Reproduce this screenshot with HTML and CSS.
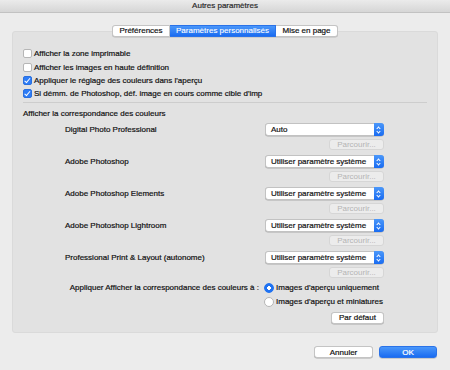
FILE: index.html
```html
<!DOCTYPE html>
<html lang="fr">
<head>
  <meta charset="UTF-8">
  <title>Autres paramètres</title>
  <link rel="stylesheet" href="styles.css">
</head>
<body>
  <div class="window">
    <div class="titlebar">Autres paramètres</div>

    <div class="tabs">
      <span class="tab tab-prefs">Préférences</span>
      <span class="tab tab-custom active">Paramètres personnalisés</span>
      <span class="tab tab-layout">Mise en page</span>
    </div>

    <div class="group">
      <label class="check"><span class="box"></span>Afficher la zone imprimable</label>
      <label class="check"><span class="box"></span>Afficher les images en haute définition</label>
      <label class="check"><span class="box on"></span>Appliquer le réglage des couleurs dans l'aperçu</label>
      <label class="check"><span class="box on"></span>Si démm. de Photoshop, déf. image en cours comme cible d'imp</label>

      <div class="separator"></div>

      <div class="heading">Afficher la correspondance des couleurs</div>

      <div class="apps">
        <div class="app">
          <span class="app-name">Digital Photo Professional</span>
          <span class="select">Auto<span class="arrows"></span></span>
          <span class="btn disabled">Parcourir...</span>
        </div>
        <div class="app">
          <span class="app-name">Adobe Photoshop</span>
          <span class="select">Utiliser paramètre système<span class="arrows"></span></span>
          <span class="btn disabled">Parcourir...</span>
        </div>
        <div class="app">
          <span class="app-name">Adobe Photoshop Elements</span>
          <span class="select">Utiliser paramètre système<span class="arrows"></span></span>
          <span class="btn disabled">Parcourir...</span>
        </div>
        <div class="app">
          <span class="app-name">Adobe Photoshop Lightroom</span>
          <span class="select">Utiliser paramètre système<span class="arrows"></span></span>
          <span class="btn disabled">Parcourir...</span>
        </div>
        <div class="app">
          <span class="app-name">Professional Print &amp; Layout (autonome)</span>
          <span class="select">Utiliser paramètre système<span class="arrows"></span></span>
          <span class="btn disabled">Parcourir...</span>
        </div>
      </div>

      <div class="apply">
        <span class="apply-label">Appliquer Afficher la correspondance des couleurs à :</span>
        <div class="radios">
          <label class="radio"><span class="dot on"></span>Images d'aperçu uniquement</label>
          <label class="radio"><span class="dot"></span>Images d'aperçu et miniatures</label>
          <span class="btn default-btn">Par défaut</span>
        </div>
      </div>
    </div>

    <div class="footer">
      <span class="btn footer-btn">Annuler</span>
      <span class="btn footer-btn primary">OK</span>
    </div>
  </div>
</body>
</html>
```

FILE: styles.css
```css
body {
  margin: 0;
  font-family: "Liberation Sans", Arial, sans-serif;
  font-size: 8px;
  color: #111;
  -webkit-text-stroke: 0.2px;
}
.window {
  width: 450px;
  height: 370px;
  background-color: #ececec;
  overflow: hidden;
}
.titlebar {
  height: 13px;
  line-height: 12px;
  box-sizing: border-box;
  text-align: center;
  background: linear-gradient(#ebebeb, #d6d6d6);
  border-bottom: 1px solid #c2c2c2;
  color: #2a2a2a;
}
.tabs {
  display: flex;
  justify-content: center;
  margin-top: 12px;
  margin-bottom: -6px;
  position: relative;
}
.tab {
  height: 12px;
  line-height: 10px;
  box-sizing: border-box;
  text-align: center;
  background-color: #fff;
  border: 1px solid #c4c4c4;
  border-left: none;
  box-shadow: 0 0.5px 0 #b8b8b8;
}
.tab-prefs {
  width: 58px;
  border-left: 1px solid #c4c4c4;
  border-radius: 3px 0 0 3px;
}
.tab-custom {
  width: 106px;
}
.tab-layout {
  width: 62px;
  border-radius: 0 3px 3px 0;
}
.tab.active {
  background: linear-gradient(#4a97fa, #1a6cf1);
  border-color: #2a72e8;
  color: #fff;
  -webkit-text-stroke: 0.1px;
}
.group {
  margin: 0 12px;
  height: 302px;
  padding: 15px 10px 0 10px;
  background-color: #e2e2e2;
  border: 1px solid #dadada;
  border-radius: 3px;
  box-sizing: border-box;
}
.check {
  display: flex;
  align-items: center;
  height: 13.4px;
}
.box {
  width: 9px;
  height: 9px;
  box-sizing: border-box;
  margin-right: 2px;
  background-color: #fff;
  border: 1px solid #b6b6b6;
  border-radius: 2px;
  position: relative;
}
.box.on {
  background-color: #2d7cf6;
  border-color: #2a6fde;
}
.box.on::after {
  content: "";
  position: absolute;
  left: 2px;
  top: 0;
  width: 2px;
  height: 4.5px;
  border: solid #fff;
  border-width: 0 1.3px 1.3px 0;
  -webkit-text-stroke: 0;
  transform: rotate(40deg);
}
.separator {
  height: 1px;
  background-color: #cdcdcd;
  margin: 1px 0 5px;
}
.heading {
  height: 12px;
  line-height: 12px;
}
.apps {
  margin-left: 42px;
  margin-top: 3px;
}
.app {
  display: grid;
  grid-template-columns: 200px 119px;
  grid-template-rows: 13px 11px;
  row-gap: 3px;
  margin-bottom: 5px;
}
.app-name {
  align-self: center;
}
.select {
  display: flex;
  align-items: center;
  height: 13px;
  box-sizing: border-box;
  padding-left: 5px;
  background-color: #fff;
  border: 0.5px solid #c2c2c2;
  border-radius: 3px;
  box-shadow: 0 0.5px 0.5px #aaa;
  position: relative;
}
.arrows {
  position: absolute;
  right: -0.5px;
  top: -0.5px;
  width: 10px;
  height: 13px;
  border-radius: 0 3px 3px 0;
  background: linear-gradient(#4a97fa, #1a6cf1);
}
.arrows::before,
.arrows::after {
  content: "";
  position: absolute;
  left: 3.5px;
  width: 2px;
  height: 2px;
  border: solid #fff;
  border-width: 1px 0 0 1px;
}
.arrows::before {
  top: 3.5px;
  transform: rotate(45deg);
}
.arrows::after {
  top: 6.5px;
  transform: rotate(225deg);
}
.btn {
  display: flex;
  align-items: center;
  justify-content: center;
  box-sizing: border-box;
  background-color: #fff;
  border: 0.5px solid #c4c4c4;
  border-radius: 3px;
  box-shadow: 0 0.5px 0.5px #aaa;
}
.app .btn {
  grid-column: 2;
  justify-self: end;
  width: 55px;
  height: 11px;
}
.btn.disabled {
  background-color: #ececec;
  color: #b4b4b4;
  border-color: #d6d6d6;
  box-shadow: none;
  -webkit-text-stroke: 0;
}
.apply {
  display: flex;
  margin-top: -2px;
}
.apply-label {
  width: 236px;
  text-align: right;
  height: 14px;
  line-height: 14px;
  margin-right: 5px;
}
.radios {
  display: flex;
  flex-direction: column;
  width: 120px;
}
.radio {
  display: flex;
  align-items: center;
  height: 14px;
}
.dot {
  width: 10px;
  height: 10px;
  margin-right: 2px;
  border: 0.5px solid #b6b6b6;
  border-radius: 50%;
  background-color: #fff;
  box-sizing: border-box;
}
.dot.on {
  background: radial-gradient(circle, #fff 0 1.6px, #1f72f2 2.1px);
  border-color: #1f72f2;
}
.default-btn {
  align-self: flex-end;
  width: 53px;
  height: 12px;
  margin-top: 3px;
}
.footer {
  display: flex;
  justify-content: flex-end;
  gap: 6px;
  margin: 13px 13px 0 0;
}
.footer-btn {
  width: 59px;
  height: 12px;
}
.footer-btn.primary {
  width: 58px;
  background: linear-gradient(#4a97fa, #1a6cf1);
  border-color: #2a72e8;
  color: #fff;
}
```
